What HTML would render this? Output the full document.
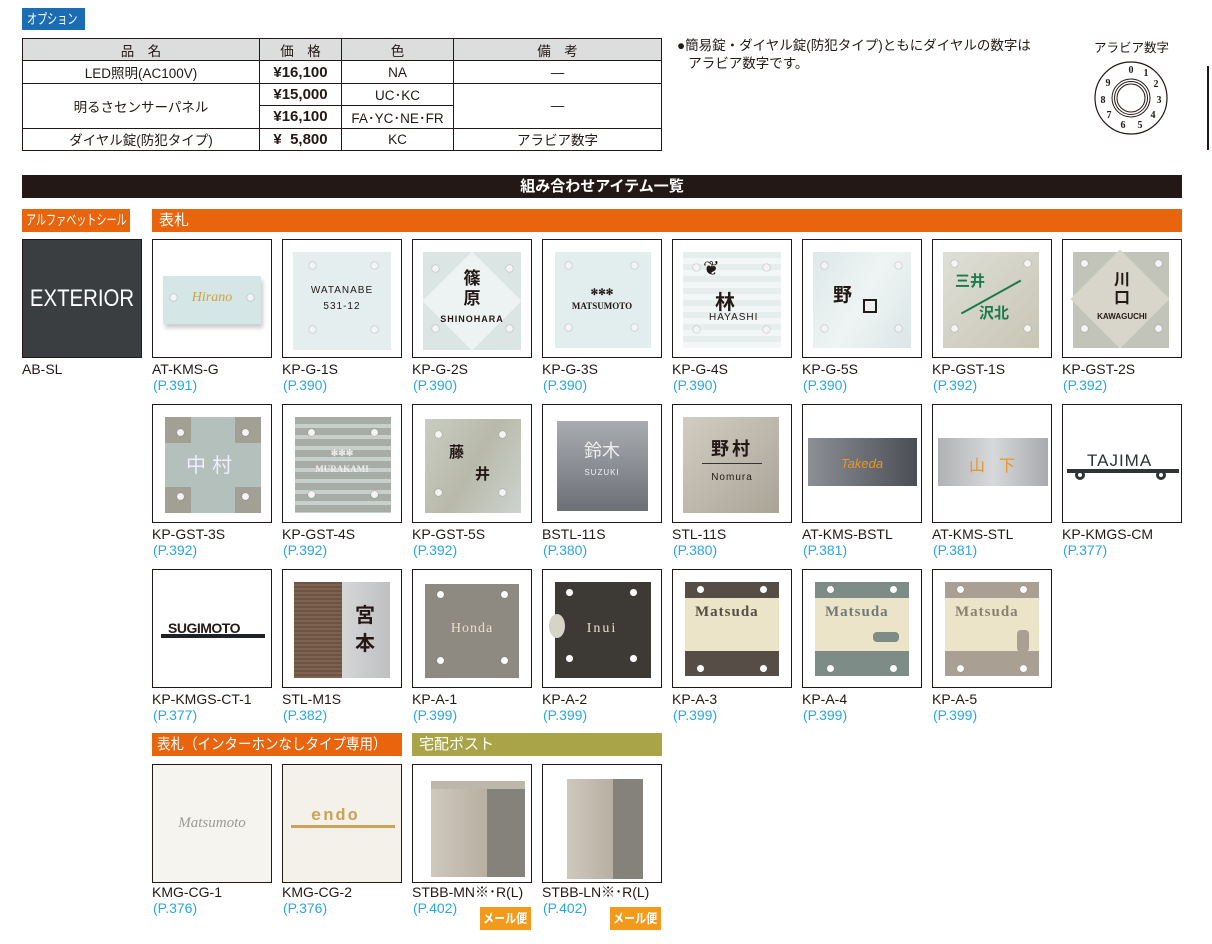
<!DOCTYPE html>
<html><head><meta charset="utf-8"><style>
*{margin:0;padding:0;box-sizing:border-box}
body{width:1212px;height:944px;background:#fff;position:relative;overflow:hidden;font-family:"Liberation Sans","Noto Sans CJK JP",sans-serif;color:#231815}
.a{position:absolute}
.t{position:absolute;width:120px;height:119px;border:1px solid #231815;background:#fff;overflow:hidden}
.t>div{position:absolute}
.l{position:absolute;font-size:14px;line-height:16px;color:#231815;white-space:nowrap}
.l span{display:block;color:#2aa7e0;padding-left:1px}
.pl{position:absolute;inset:0;display:flex;align-items:center;justify-content:center;flex-direction:column;text-align:center}
.d{width:7px;height:7px;border-radius:50%;background:#f4f4f4;box-shadow:0 0 1px #666}
table{border-collapse:collapse;position:absolute;left:22px;top:38px;font-size:13.5px}
td{border:1px solid #231815;text-align:center;height:22.4px;padding:0}
.bar{position:absolute;color:#fff;font-size:15px;line-height:23px;padding-left:7px;white-space:nowrap;overflow:hidden}
.sx{display:inline-block;transform-origin:left center}
</style></head><body>

<div class="a" style="left:22px;top:8px;width:63px;height:22px;background:#1a6db5;color:#fff;font-size:14px;line-height:22px;padding-left:5px;white-space:nowrap;overflow:hidden"><span class="sx" style="transform:scaleX(.72)">オプション</span></div>
<table>
<tr style="background:#dcdddd"><td style="width:237px">品　名</td><td style="width:82px">価　格</td><td style="width:112px">色</td><td style="width:208px">備　考</td></tr>
<tr><td>LED照明(AC100V)</td><td style="font-weight:bold;font-size:15px">¥16,100</td><td>NA</td><td>—</td></tr>
<tr><td rowspan="2">明るさセンサーパネル</td><td style="font-weight:bold;font-size:15px">¥15,000</td><td>UC･KC</td><td rowspan="2">—</td></tr>
<tr><td style="font-weight:bold;font-size:15px">¥16,100</td><td>FA･YC･NE･FR</td></tr>
<tr><td>ダイヤル錠(防犯タイプ)</td><td style="font-weight:bold;font-size:15px">¥&nbsp;&nbsp;5,800</td><td>KC</td><td>アラビア数字</td></tr>
</table>

<div class="a" style="left:677px;top:37px;font-size:13.5px;line-height:18px">●簡易錠・ダイヤル錠(防犯タイプ)ともにダイヤルの数字は<br>&nbsp;&nbsp;&nbsp;アラビア数字です。</div>
<div class="a" style="left:1094px;top:37px;font-size:12.5px">アラビア数字</div>
<svg class="a" style="left:1088px;top:58px" width="86" height="78" viewBox="0 0 86 78">
<circle cx="43" cy="40" r="36" fill="#fff" stroke="#231815" stroke-width="1.2"/>
<circle cx="43" cy="40" r="19" fill="none" stroke="#231815"/>
<circle cx="43" cy="40" r="16.5" fill="none" stroke="#231815"/>
<circle cx="43" cy="40" r="14" fill="none" stroke="#231815"/>
<g font-family="Liberation Serif" font-weight="bold" font-size="10" text-anchor="middle" fill="#231815">
<text x="43" y="15">0</text><text x="58" y="18">1</text><text x="68" y="29">2</text><text x="71" y="45">3</text><text x="65" y="60">4</text><text x="52" y="70">5</text><text x="35" y="70">6</text><text x="21" y="60">7</text><text x="15" y="45">8</text><text x="20" y="28">9</text></g>
</svg>
<div class="a" style="left:1207px;top:66px;width:2px;height:84px;background:#231815"></div>

<div class="a" style="left:22px;top:175px;width:1160px;height:23px;background:#231815;color:#fff;text-align:center;font-size:15px;line-height:23px;font-weight:bold">組み合わせアイテム一覧</div>
<div class="bar" style="left:22px;top:209px;width:108px;height:23px;background:#e8650d;font-size:14px;padding-left:4px"><span class="sx" style="transform:scaleX(.72)">アルファベットシール</span></div>
<div class="bar" style="left:152px;top:209px;width:1030px;height:23px;background:#e8650d">表札</div>
<div class="bar" style="left:152px;top:733px;width:250px;height:23px;background:#e8650d;padding-left:5px"><span class="sx" style="transform:scaleX(.9)">表札（インターホンなしタイプ専用）</span></div>
<div class="bar" style="left:412px;top:733px;width:250px;height:23px;background:#aaa449">宅配ポスト</div>

<!-- Row 1 -->
<div class="t" style="left:22px;top:239px;background:#3b3e41"><div class="pl" style="color:#fff;font-size:24px;transform:scaleX(.85)">EXTERIOR</div></div>
<div class="l" style="left:22px;top:361px">AB-SL</div>

<div class="t" style="left:152px;top:239px"><div style="left:10px;top:36px;width:98px;height:48px;background:#d4e6e6;box-shadow:2px 4px 4px #ccc"></div><div class="pl" style="color:#d4a040;font-style:italic;font-family:'Liberation Serif';font-size:14px;top:-2px">Hirano</div><div class="d" style="left:17px;top:54px"></div><div class="d" style="left:94px;top:54px"></div></div>
<div class="l" style="left:152px;top:361px">AT-KMS-G<span>(P.391)</span></div>

<div class="t" style="left:282px;top:239px"><div style="left:10px;top:12px;width:98px;height:98px;background:#e4eeee"></div><div class="pl" style="font-size:10px;letter-spacing:1px;line-height:16px">WATANABE<br>531-12</div><div class="d" style="left:26px;top:22px"></div><div class="d" style="left:88px;top:22px"></div><div class="d" style="left:26px;top:86px"></div><div class="d" style="left:88px;top:86px"></div></div>
<div class="l" style="left:282px;top:361px">KP-G-1S<span>(P.390)</span></div>

<div class="t" style="left:412px;top:239px"><div style="left:10px;top:12px;width:98px;height:98px;background:#dbe6e4"></div><div style="left:24px;top:26px;width:70px;height:70px;background:#edf3f2;transform:rotate(45deg)"></div><div class="pl" style="font-size:17px;line-height:20px;font-weight:bold">篠<br>原<div style="font-size:9px;letter-spacing:1px">SHINOHARA</div></div><div class="d" style="left:19px;top:25px"></div><div class="d" style="left:93px;top:25px"></div><div class="d" style="left:19px;top:85px"></div><div class="d" style="left:93px;top:85px"></div></div>
<div class="l" style="left:412px;top:361px">KP-G-2S<span>(P.390)</span></div>

<div class="t" style="left:542px;top:239px"><div style="left:12px;top:12px;width:96px;height:96px;background:#e2eeee"></div><div class="pl" style="font-size:9px;font-family:'Liberation Serif';font-weight:bold;line-height:14px">✻✻✻<br>MATSUMOTO</div><div class="d" style="left:22px;top:22px"></div><div class="d" style="left:88px;top:22px"></div><div class="d" style="left:22px;top:84px"></div><div class="d" style="left:88px;top:84px"></div></div>
<div class="l" style="left:542px;top:361px">KP-G-3S<span>(P.390)</span></div>

<div class="t" style="left:672px;top:239px"><div style="left:10px;top:12px;width:98px;height:96px;background:repeating-linear-gradient(#e6eded 0 6px,#f3f6f6 6px 12px)"></div><div style="left:42px;top:46px;font-size:20px;font-weight:bold">林</div><div style="left:30px;top:16px;font-size:20px">❦</div><div style="left:36px;top:72px;font-size:10px;letter-spacing:1px">HAYASHI</div><div class="d" style="left:20px;top:24px"></div><div class="d" style="left:90px;top:24px"></div><div class="d" style="left:20px;top:86px"></div><div class="d" style="left:90px;top:86px"></div></div>
<div class="l" style="left:672px;top:361px">KP-G-4S<span>(P.390)</span></div>

<div class="t" style="left:802px;top:239px"><div style="left:10px;top:12px;width:98px;height:96px;background:linear-gradient(120deg,#dde8e8,#eef4f4,#dbe6e6)"></div><div style="left:30px;top:40px;font-size:19px;font-weight:bold">野</div><div style="left:60px;top:59px;width:14px;height:14px;border:2px solid #231815"></div><div class="d" style="left:18px;top:22px"></div><div class="d" style="left:92px;top:22px"></div><div class="d" style="left:18px;top:85px"></div><div class="d" style="left:92px;top:85px"></div></div>
<div class="l" style="left:802px;top:361px">KP-G-5S<span>(P.390)</span></div>

<div class="t" style="left:932px;top:239px"><div style="left:10px;top:12px;width:96px;height:96px;background:linear-gradient(135deg,#dedfd6,#c8c5b5)"></div><div style="left:22px;top:30px;color:#1a7a4a;font-size:15px;font-weight:bold">三井</div><div style="left:46px;top:62px;color:#1a7a4a;font-size:15px;font-weight:bold">沢北</div><div style="left:24px;top:56px;width:68px;height:1.5px;background:#1a7a4a;transform:rotate(-29deg)"></div><div class="d" style="left:18px;top:20px"></div><div class="d" style="left:91px;top:20px"></div><div class="d" style="left:18px;top:85px"></div><div class="d" style="left:91px;top:85px"></div></div>
<div class="l" style="left:932px;top:361px">KP-GST-1S<span>(P.392)</span></div>

<div class="t" style="left:1062px;top:239px"><div style="left:10px;top:12px;width:96px;height:96px;background:#c3c4b9"></div><div style="left:22px;top:24px;width:70px;height:70px;background:#d8d6ca;transform:rotate(45deg)"></div><div class="pl" style="font-size:16px;font-weight:bold;line-height:18px">川<br>口<div style="font-size:8px">KAWAGUCHI</div></div><div class="d" style="left:18px;top:20px"></div><div class="d" style="left:92px;top:20px"></div><div class="d" style="left:18px;top:85px"></div><div class="d" style="left:92px;top:85px"></div></div>
<div class="l" style="left:1062px;top:361px">KP-GST-2S<span>(P.392)</span></div>

<!-- Row 2 -->
<div class="t" style="left:152px;top:404px"><div style="left:12px;top:12px;width:96px;height:96px;background:#b4c0bc"></div><div style="left:12px;top:12px;width:26px;height:26px;background:#a29f94"></div><div style="left:82px;top:12px;width:26px;height:26px;background:#a29f94"></div><div style="left:12px;top:82px;width:26px;height:26px;background:#a29f94"></div><div style="left:82px;top:82px;width:26px;height:26px;background:#a29f94"></div><div class="pl" style="color:#eef;font-size:20px;letter-spacing:6px">中村</div><div class="d" style="left:24px;top:24px"></div><div class="d" style="left:89px;top:24px"></div><div class="d" style="left:24px;top:88px"></div><div class="d" style="left:89px;top:88px"></div></div>
<div class="l" style="left:152px;top:526px">KP-GST-3S<span>(P.392)</span></div>

<div class="t" style="left:282px;top:404px"><div style="left:12px;top:12px;width:96px;height:96px;background:repeating-linear-gradient(#a7aca6 0 7px,#c6d0cc 7px 11px)"></div><div class="pl" style="color:#eee;font-size:9px;font-family:'Liberation Serif';font-weight:bold;line-height:16px;top:-6px">✻✻✻<br>MURAKAMI</div><div class="d" style="left:25px;top:24px"></div><div class="d" style="left:88px;top:24px"></div><div class="d" style="left:25px;top:86px"></div><div class="d" style="left:88px;top:86px"></div></div>
<div class="l" style="left:282px;top:526px">KP-GST-4S<span>(P.392)</span></div>

<div class="t" style="left:412px;top:404px"><div style="left:12px;top:14px;width:96px;height:94px;background:linear-gradient(120deg,#c9cdc2,#b8b9aa,#cdd4cd)"></div><div style="left:36px;top:36px;font-size:15px;font-weight:bold">藤</div><div style="left:62px;top:58px;font-size:15px;font-weight:bold">井</div><div class="d" style="left:22px;top:26px"></div><div class="d" style="left:86px;top:26px"></div><div class="d" style="left:22px;top:84px"></div><div class="d" style="left:86px;top:84px"></div></div>
<div class="l" style="left:412px;top:526px">KP-GST-5S<span>(P.392)</span></div>

<div class="t" style="left:542px;top:404px"><div style="left:14px;top:16px;width:91px;height:90px;background:linear-gradient(#a9abb0,#6c7076)"></div><div class="pl" style="color:#eee;font-size:18px;line-height:22px;top:-4px">鈴木<div style="font-size:8px;letter-spacing:1px">SUZUKI</div></div></div>
<div class="l" style="left:542px;top:526px">BSTL-11S<span>(P.380)</span></div>

<div class="t" style="left:672px;top:404px"><div style="left:10px;top:12px;width:96px;height:96px;background:linear-gradient(135deg,#d2cdc2,#aaa497)"></div><div class="pl" style="font-size:18px;font-weight:bold;line-height:22px;letter-spacing:3px">野村<div style="width:60px;height:1px;background:#333;margin:3px auto"></div><div style="font-size:10px;letter-spacing:1px;font-weight:normal">Nomura</div></div></div>
<div class="l" style="left:672px;top:526px">STL-11S<span>(P.380)</span></div>

<div class="t" style="left:802px;top:404px"><div style="left:5px;top:33px;width:109px;height:48px;background:linear-gradient(90deg,#8c9095,#4b4f55)"></div><div class="pl" style="color:#e8952a;font-style:italic;font-size:13px">Takeda</div></div>
<div class="l" style="left:802px;top:526px">AT-KMS-BSTL<span>(P.381)</span></div>

<div class="t" style="left:932px;top:404px"><div style="left:5px;top:33px;width:110px;height:48px;background:linear-gradient(90deg,#b0b2b4,#d6d8da,#a8aaad)"></div><div class="pl" style="color:#e8952a;font-size:16px;letter-spacing:14px;padding-left:14px">山下</div></div>
<div class="l" style="left:932px;top:526px">AT-KMS-STL<span>(P.381)</span></div>

<div class="t" style="left:1062px;top:404px"><div style="left:24px;top:46px;font-size:17px;color:#2e3336;letter-spacing:1px">TAJIMA</div><div style="left:4px;top:64px;width:112px;height:4px;background:#2e3336"></div><div style="left:12px;top:65px;width:10px;height:10px;border-radius:50%;border:3px solid #2e3336"></div><div style="left:93px;top:65px;width:10px;height:10px;border-radius:50%;border:3px solid #2e3336"></div></div>
<div class="l" style="left:1062px;top:526px">KP-KMGS-CM<span>(P.377)</span></div>

<!-- Row 3 -->
<div class="t" style="left:152px;top:569px"><div style="left:15px;top:50px;font-size:14px;letter-spacing:-.5px;font-weight:bold">SUGIMOTO</div><div style="left:8px;top:64px;width:104px;height:4px;background:#1e2226"></div></div>
<div class="l" style="left:152px;top:691px">KP-KMGS-CT-1<span>(P.377)</span></div>

<div class="t" style="left:282px;top:569px"><div style="left:11px;top:12px;width:48px;height:96px;background:repeating-linear-gradient(#6d5445 0 2px,#7e6351 2px 4px)"></div><div style="left:59px;top:12px;width:48px;height:96px;background:linear-gradient(90deg,#d5d6d8,#bfc0c2)"></div><div style="left:72px;top:32px;font-size:20px;font-weight:bold;line-height:28px">宮<br>本</div></div>
<div class="l" style="left:282px;top:691px">STL-M1S<span>(P.382)</span></div>

<div class="t" style="left:412px;top:569px"><div style="left:12px;top:14px;width:94px;height:94px;background:#8e8a82"></div><div class="pl" style="color:#e8e0c8;font-family:'Liberation Serif';font-size:14px;letter-spacing:1px">Honda</div><div class="d" style="left:24px;top:21px;background:#fff"></div><div class="d" style="left:88px;top:21px;background:#fff"></div><div class="d" style="left:24px;top:87px;background:#fff"></div><div class="d" style="left:88px;top:87px;background:#fff"></div></div>
<div class="l" style="left:412px;top:691px">KP-A-1<span>(P.399)</span></div>

<div class="t" style="left:542px;top:569px"><div style="left:12px;top:12px;width:96px;height:96px;background:#3d3935"></div><div style="left:6px;top:44px;width:16px;height:24px;border-radius:50%;background:#d8d3c7"></div><div class="pl" style="color:#e8e0c8;font-family:'Liberation Serif';font-size:14px;letter-spacing:2px">Inui</div><div class="d" style="left:23px;top:19px;background:#fff"></div><div class="d" style="left:87px;top:19px;background:#fff"></div><div class="d" style="left:23px;top:85px;background:#fff"></div><div class="d" style="left:87px;top:85px;background:#fff"></div></div>
<div class="l" style="left:542px;top:691px">KP-A-2<span>(P.399)</span></div>

<div class="t" style="left:672px;top:569px"><div style="left:12px;top:12px;width:94px;height:94px;background:#ece4c8"></div><div style="left:12px;top:12px;width:94px;height:16px;background:#554d46"></div><div style="left:12px;top:81px;width:94px;height:25px;background:#554d46"></div><div style="left:22px;top:34px;font-family:'Liberation Serif';font-weight:bold;font-size:15px;color:#554d46;letter-spacing:1px">Matsuda</div><div class="d" style="left:24px;top:16px;background:#fff"></div><div class="d" style="left:87px;top:16px;background:#fff"></div><div class="d" style="left:24px;top:95px;background:#fff"></div><div class="d" style="left:87px;top:95px;background:#fff"></div></div>
<div class="l" style="left:672px;top:691px">KP-A-3<span>(P.399)</span></div>

<div class="t" style="left:802px;top:569px"><div style="left:12px;top:12px;width:94px;height:94px;background:#ece4c8"></div><div style="left:12px;top:12px;width:94px;height:16px;background:#7e8c87"></div><div style="left:12px;top:81px;width:94px;height:25px;background:#7e8c87"></div><div style="left:22px;top:34px;font-family:'Liberation Serif';font-weight:bold;font-size:15px;color:#6f7a76;letter-spacing:1px">Matsuda</div><div style="left:70px;top:62px;width:26px;height:10px;background:#7e8c87;border-radius:4px"></div><div class="d" style="left:24px;top:16px;background:#fff"></div><div class="d" style="left:87px;top:16px;background:#fff"></div><div class="d" style="left:24px;top:95px;background:#fff"></div><div class="d" style="left:87px;top:95px;background:#fff"></div></div>
<div class="l" style="left:802px;top:691px">KP-A-4<span>(P.399)</span></div>

<div class="t" style="left:932px;top:569px"><div style="left:12px;top:12px;width:94px;height:94px;background:#ece4c8"></div><div style="left:12px;top:12px;width:94px;height:16px;background:#a9a093"></div><div style="left:12px;top:81px;width:94px;height:25px;background:#a9a093"></div><div style="left:22px;top:34px;font-family:'Liberation Serif';font-weight:bold;font-size:15px;color:#8a8173;letter-spacing:1px">Matsuda</div><div style="left:84px;top:60px;width:12px;height:22px;background:#a9a093;border-radius:4px"></div><div class="d" style="left:24px;top:16px;background:#fff"></div><div class="d" style="left:87px;top:16px;background:#fff"></div><div class="d" style="left:24px;top:95px;background:#fff"></div><div class="d" style="left:87px;top:95px;background:#fff"></div></div>
<div class="l" style="left:932px;top:691px">KP-A-5<span>(P.399)</span></div>

<!-- Row 4 -->
<div class="t" style="left:152px;top:764px;background:#f6f4ef"><div class="pl" style="color:#9a9a9a;font-style:italic;font-family:'Liberation Serif';font-size:15px">Matsumoto</div></div>
<div class="l" style="left:152px;top:884px">KMG-CG-1<span>(P.376)</span></div>

<div class="t" style="left:282px;top:764px;background:#f4f1ea"><div style="left:28px;top:42px;font-family:'Liberation Mono';font-weight:bold;font-size:17px;color:#c9a45a;letter-spacing:2px">endo</div><div style="left:8px;top:60px;width:104px;height:3px;background:#c9a45a"></div></div>
<div class="l" style="left:282px;top:884px">KMG-CG-2<span>(P.376)</span></div>

<div class="t" style="left:412px;top:764px"><div style="left:18px;top:22px;width:56px;height:90px;background:linear-gradient(90deg,#cfc8bc,#b7afa2)"></div><div style="left:74px;top:22px;width:38px;height:90px;background:#85817b"></div><div style="left:18px;top:16px;width:94px;height:8px;background:#bcb6ab"></div></div>
<div class="l" style="left:412px;top:884px">STBB-MN※･R(L)<span>(P.402)</span></div>
<div class="a" style="left:480px;top:907px;width:51px;height:23px;background:#f39a1c;color:#fff;font-size:13px;font-weight:bold;line-height:23px;padding-left:3px;white-space:nowrap;overflow:hidden"><span class="sx" style="transform:scaleX(.85)">メール便</span></div>

<div class="t" style="left:542px;top:764px"><div style="left:24px;top:14px;width:46px;height:100px;background:linear-gradient(90deg,#cfc8bc,#b7afa2)"></div><div style="left:70px;top:14px;width:30px;height:100px;background:#85817b"></div></div>
<div class="l" style="left:542px;top:884px">STBB-LN※･R(L)<span>(P.402)</span></div>
<div class="a" style="left:610px;top:907px;width:51px;height:23px;background:#f39a1c;color:#fff;font-size:13px;font-weight:bold;line-height:23px;padding-left:3px;white-space:nowrap;overflow:hidden"><span class="sx" style="transform:scaleX(.85)">メール便</span></div>

</body></html>
